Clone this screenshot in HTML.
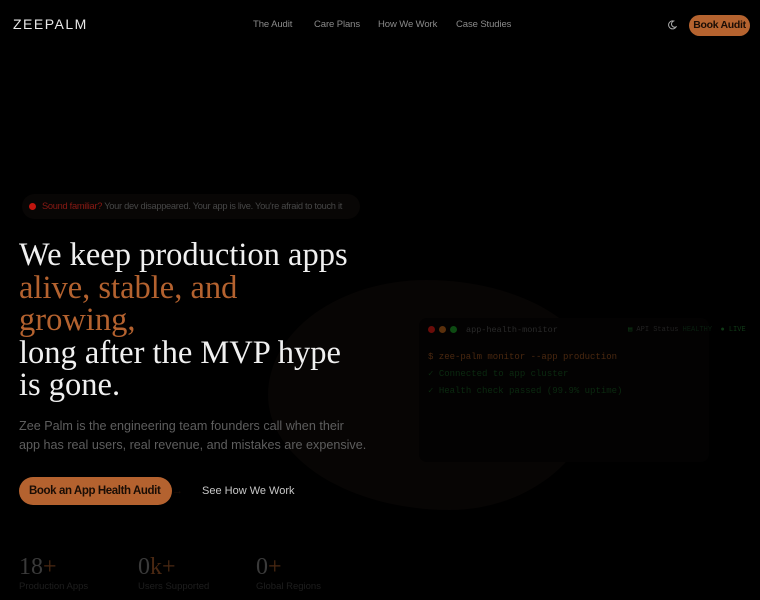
<!DOCTYPE html>
<html><head><meta charset="utf-8"><style>
*{margin:0;padding:0;box-sizing:border-box}
body{width:760px;height:600px;background:#000;overflow:hidden;position:relative;font-family:"Liberation Sans",sans-serif;color:#ddd}
.abs{position:absolute;white-space:nowrap}
.logo{left:13px;top:16px;font-size:14px;letter-spacing:1.5px;color:#e8e8e8;font-weight:400}
.nav{top:19px;font-size:9.5px;color:#8a8a8a;letter-spacing:-.1px}
.book{left:689px;top:15px;width:61px;height:21px;border-radius:11px;background:#b5632f;color:#1a0d05;font-size:10.5px;font-weight:bold;text-align:center;line-height:21px;letter-spacing:-.3px}
.pill{left:22px;top:194px;width:338px;height:25px;border-radius:13px;background:#080605;font-size:9.3px;line-height:25px;padding-left:20px;color:#474747;letter-spacing:-.3px}
.pill b{font-weight:normal;color:#8a1a14}
.dot{left:29px;top:203px;width:7px;height:7px;border-radius:50%;background:#c0150e}
h1{position:absolute;left:19px;top:239px;font-family:"Liberation Serif",serif;font-weight:normal;font-size:32.5px;line-height:32.5px;color:#f0f0f0;letter-spacing:0}
h1 span{color:#b4622f}
.p{left:19px;top:417px;font-size:12.6px;line-height:19px;color:#5e5e5e}
.cta{left:19px;top:477px;width:153px;height:28px;border-radius:14px;background:#b4622f;color:#1a0d05;font-size:11.5px;font-weight:bold;line-height:28px;padding-left:10px;letter-spacing:-.4px}
.see{left:202px;top:485px;font-size:11px;color:#c8c8c8}
.num{top:554px;font-family:"Liberation Serif",serif;font-size:24px;color:#3a3a3a}
.num span{color:#4a2812}
.lab{top:581px;font-size:9.5px;color:#1e1e1e}
.blob{left:268px;top:280px;width:330px;height:230px;border-radius:48% 52% 45% 55%/50% 45% 55% 50%;background:#070504}
.term{left:419px;top:318px;width:290px;height:144px;border-radius:8px;background:#030202}
.mono{font-family:"Liberation Mono",monospace;font-size:9px}
</style></head><body>
<div class="abs logo">ZEEPALM</div>
<div class="abs nav" style="left:253px">The Audit</div>
<div class="abs nav" style="left:314px">Care Plans</div>
<div class="abs nav" style="left:378px">How We Work</div>
<div class="abs nav" style="left:456px">Case Studies</div>
<svg class="abs" style="left:667px;top:20px" width="10" height="10" viewBox="0 0 10 10"><path d="M6.5 1A4 4 0 1 0 9 7 3.2 3.2 0 0 1 6.5 1z" fill="none" stroke="#aaa" stroke-width="1"/></svg>
<div class="abs book">Book Audit</div>
<div class="abs blob"></div>
<div class="abs term"></div>
<div class="abs" style="left:428px;top:326px;width:7px;height:7px;border-radius:50%;background:#6a0c09"></div>
<div class="abs" style="left:439px;top:326px;width:7px;height:7px;border-radius:50%;background:#5a300c"></div>
<div class="abs" style="left:450px;top:326px;width:7px;height:7px;border-radius:50%;background:#0d4a12"></div>
<div class="abs mono" style="left:466px;top:325px;color:#2a2a2a;font-size:8.5px">app-health-monitor</div>
<div class="abs mono" style="left:428px;top:352px;color:#4a2810">$ zee-palm monitor --app production</div>
<div class="abs mono" style="left:428px;top:369px;color:#0b2a10">✓ Connected to app cluster</div>
<div class="abs mono" style="left:428px;top:386px;color:#0b2a10">✓ Health check passed (99.9% uptime)</div>
<div class="abs mono" style="left:628px;top:325px;font-size:7px;color:#222"><span style="color:#0f3a16">▤</span> API Status <span style="color:#0a2010">HEALTHY</span> &nbsp;<span style="color:#0f3a16">● LIVE</span></div>
<div class="abs pill"><b>Sound familiar?</b> Your dev disappeared. Your app is live. You're afraid to touch it</div>
<div class="abs dot"></div>
<h1>We keep production apps<br><span>alive, stable, and<br>growing,</span><br>long after the MVP hype<br>is gone.</h1>
<div class="abs p">Zee Palm is the engineering team founders call when their<br>app has real users, real revenue, and mistakes are expensive.</div>
<div class="abs cta">Book an App Health Audit &nbsp;&nbsp;&nbsp;→</div>
<div class="abs see">See How We Work</div>
<div class="abs num" style="left:19px">18<span>+</span></div>
<div class="abs num" style="left:138px">0<span>k+</span></div>
<div class="abs num" style="left:256px">0<span>+</span></div>
<div class="abs lab" style="left:19px">Production Apps</div>
<div class="abs lab" style="left:138px">Users Supported</div>
<div class="abs lab" style="left:256px">Global Regions</div>
</body></html>
